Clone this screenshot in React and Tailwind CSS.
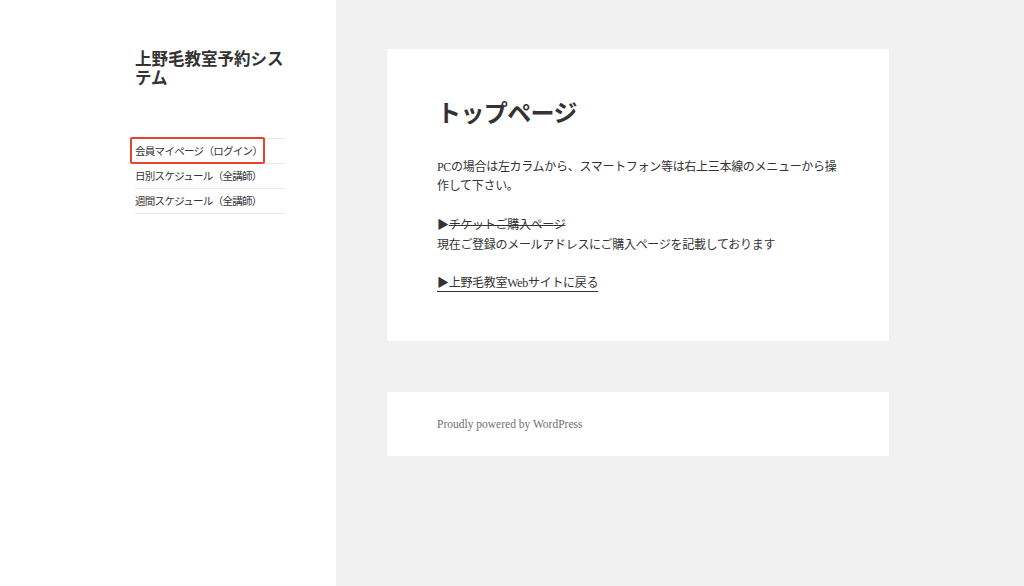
import React from "react";

const cjk = { fontFamily: '"Noto Serif", "DejaVu Serif", "Noto Sans CJK JP", serif' };

export default function App() {
  return (
    <div className="flex min-h-[586px] w-full bg-[#f1f1f1] text-[#333333]" style={cjk}>
      <aside className="w-[336px] shrink-0 bg-white pl-[135px] pr-[51px] pt-[49px]">
        <h1
          className="text-[16.5px] font-bold leading-[19px] text-[#333333]"
          style={{ fontFamily: '"Noto Sans CJK JP", sans-serif' }}
        >
          上野毛教室予約システム
        </h1>
        <nav className="mt-[51px]">
          <ul className="border-t border-[#eaeaea] text-[10.5px]" style={{ fontFamily: '"Noto Sans CJK JP", sans-serif' }}>
            <li className="flex h-[25px] items-center border-b border-[#eaeaea]">
              <span className="relative tracking-[-0.7px]">
                会員マイページ（ログイン）
                <span className="pointer-events-none absolute -left-[5px] -right-[3px] -top-[6px] -bottom-[5px] rounded-[2px] border-2 border-[#e5432e]" />
              </span>
            </li>
            <li className="flex h-[25px] items-center border-b border-[#eaeaea] tracking-[-0.7px]">日別スケジュール（全講師）</li>
            <li className="flex h-[25px] items-center border-b border-[#eaeaea] tracking-[-0.7px]">週間スケジュール（全講師）</li>
          </ul>
        </nav>
      </aside>
      <main className="flex-1 pl-[51px] pt-[49px]">
        <article className="w-[502px] bg-white px-[50px] pb-[47px] pt-[47px]">
          <h2
            className="text-[24px] font-bold leading-[32px] tracking-[-0.6px] text-[#333333]"
            style={{ fontFamily: '"Noto Sans CJK JP", serif' }}
          >
            トップページ
          </h2>
          <div
            className="mt-[30px] text-[12px] leading-[19.4px] tracking-[-0.3px] text-[#333333]"
            style={{ fontFamily: '"Liberation Serif", "Noto Sans CJK JP", serif' }}
          >
            <p className="mb-[19.4px] whitespace-nowrap">
              PCの場合は左カラムから、スマートフォン等は右上三本線のメニューから操
              <br />
              作して下さい。
            </p>
            <p className="mb-[19.4px]">
              ▶<span className="line-through">チケットご購入ページ</span>
              <br />
              現在ご登録のメールアドレスにご購入ページを記載しております
            </p>
            <p>
              <a className="border-b border-[#333333] pb-[1px]">▶上野毛教室Webサイトに戻る</a>
            </p>
          </div>
        </article>
        <footer className="mt-[51px] flex h-[64px] w-[502px] items-center bg-white px-[50px] pt-[2px]">
          <span className="text-[11.5px] text-[#707070]" style={{ fontFamily: '"Liberation Serif", serif' }}>
            Proudly powered by WordPress
          </span>
        </footer>
      </main>
    </div>
  );
}
